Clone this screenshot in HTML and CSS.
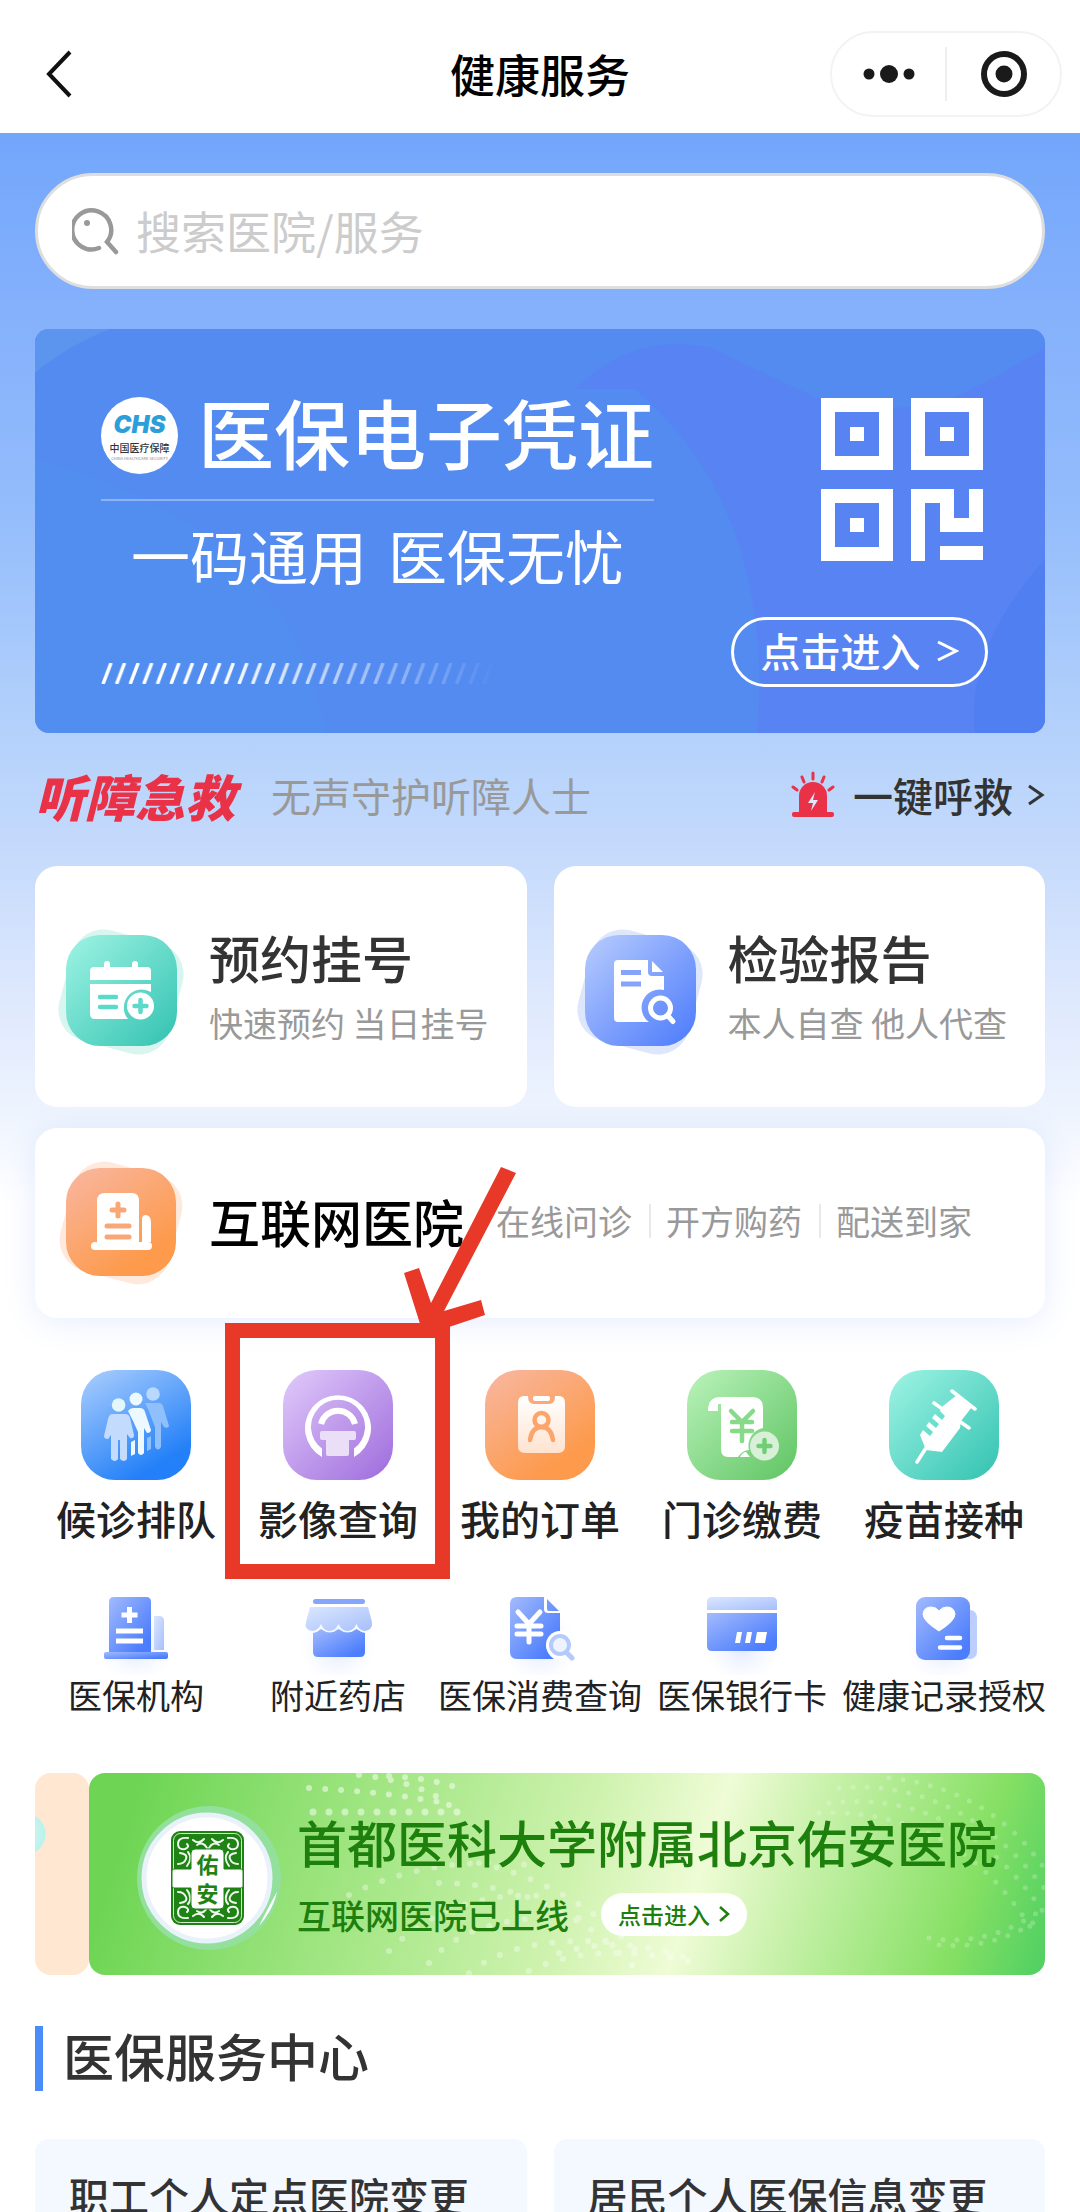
FILE: index.html
```html
<!DOCTYPE html>
<html lang="zh-CN">
<head>
<meta charset="utf-8">
<meta name="viewport" content="width=device-width, initial-scale=1">
<title>健康服务</title>
<link rel="stylesheet" href="styles.css">
</head>
<body>
<svg class="defs" aria-hidden="true">
  <defs>
    <linearGradient id="teal" x1="0" y1="0" x2="1" y2="1"><stop offset=".1" stop-color="#94efdf"/><stop offset=".9" stop-color="#3dc7b6"/></linearGradient>
    <linearGradient id="blue" x1="0" y1="0" x2="1" y2="1"><stop offset=".1" stop-color="#adc4fd"/><stop offset=".9" stop-color="#5682fc"/></linearGradient>
    <linearGradient id="orange" x1="0" y1="0" x2=".7" y2="1"><stop offset=".1" stop-color="#f9b498"/><stop offset=".9" stop-color="#fd9a4b"/></linearGradient>
    <linearGradient id="sky" x1="0" y1="0" x2=".6" y2="1"><stop offset=".05" stop-color="#a5cbfd"/><stop offset=".95" stop-color="#2380f8"/></linearGradient>
    <linearGradient id="purple" x1="0" y1="0" x2="1" y2="1"><stop offset=".1" stop-color="#dac1f8"/><stop offset=".9" stop-color="#a575df"/></linearGradient>
    <linearGradient id="green" x1="0" y1="0" x2="1" y2="1"><stop offset=".1" stop-color="#b1eeb2"/><stop offset=".9" stop-color="#68c96b"/></linearGradient>
    <linearGradient id="indigo" x1="0" y1="0" x2="1" y2="1"><stop offset="0" stop-color="#a3bbfd"/><stop offset=".85" stop-color="#4c7dfc"/></linearGradient>
    <linearGradient id="pale" x1="0" y1="0" x2="1" y2="1"><stop offset="0" stop-color="#dbe7ff"/><stop offset="1" stop-color="#a6bffb"/></linearGradient>
    <linearGradient id="sheet" x1="0" y1="0" x2="0" y2="1"><stop offset="0" stop-color="#fff"/><stop offset="1" stop-color="#ffe3d0"/></linearGradient>
    <linearGradient id="fade" gradientUnits="userSpaceOnUse" x1="0" y1="0" x2="396" y2="0"><stop offset=".3" stop-color="#fff"/><stop offset="1" stop-color="#fff" stop-opacity="0"/></linearGradient>
    <pattern id="slashes" width="13.600" height="21" patternUnits="userSpaceOnUse"><path d="M2 21 10 0" stroke="#fff" stroke-width="3.500"/></pattern>
    <mask id="fade-mask"><rect width="396" height="21" fill="url(#fade)"/></mask>
    <radialGradient id="glow"><stop offset="0" stop-color="#dfe8ff"/><stop offset="1" stop-color="#f3f6ff" stop-opacity="0"/></radialGradient>
  </defs>
</svg>

<header class="topbar">
  <button class="back" type="button" aria-label="返回">
    <svg width="28" height="48" viewBox="0 0 28 48"><path d="M26 2 5 24l21 22" fill="none" stroke="#111" stroke-width="4"/></svg>
  </button>
  <h1 class="topbar-title">健康服务</h1>
  <div class="capsule">
    <button class="capsule-btn" type="button" aria-label="更多">
      <svg width="54" height="24" viewBox="0 0 54 24" fill="#1a1a1a"><circle cx="7" cy="12" r="5.500"/><circle cx="27" cy="12" r="9"/><circle cx="47" cy="12" r="5.500"/></svg>
    </button>
    <button class="capsule-btn" type="button" aria-label="关闭">
      <svg width="46" height="46" viewBox="0 0 46 46"><circle cx="23" cy="23" r="20" fill="none" stroke="#1a1a1a" stroke-width="6"/><circle cx="23" cy="23" r="8.500" fill="#1a1a1a"/></svg>
    </button>
  </div>
</header>

<main class="page">
  <form class="search" role="search">
    <label class="search-icon" for="q" aria-label="搜索">
      <svg width="48" height="48" viewBox="0 0 48 48" fill="none" stroke="#999" stroke-width="4.500" stroke-linecap="round"><path d="M27 41A19.500 19.500 0 1 1 35 35L44 45"/><circle cx="15" cy="16" r="3" fill="#999" stroke="none"/></svg>
    </label>
    <input class="search-input" id="q" type="search" placeholder="搜索医院/服务">
  </form>

  <a class="voucher" href="#voucher">
    <svg class="voucher-bg" viewBox="0 0 1010 404" preserveAspectRatio="none" aria-hidden="true">
      <path d="M0 0h75Q30 18 0 44z" fill="#5b95ee"/>
      <path d="M0 130Q260 200 290 404H0z" fill="#5094ee" opacity=".4"/>
      <path d="M540 60Q600 0 680 20Q740 50 780 68Q860 90 920 68Q970 45 1010 18V404H722Q740 180 600 60z" fill="#5a80f2" opacity=".7"/>
      <path d="M1010 230Q930 320 940 404h70z" fill="#4f7ff0"/>
    </svg>
    <div class="voucher-main">
      <div class="voucher-head">
        <span class="chs"><b class="chs-mark">CHS</b><span class="chs-name">中国医疗保障</span><span class="chs-en">CHINA HEALTHCARE SECURITY</span></span>
        <strong class="voucher-title">医保电子凭证</strong>
      </div>
      <p class="voucher-sub"><span>一码通用</span><span>医保无忧</span></p>
      <svg class="hatch" width="396" height="21" viewBox="0 0 396 21" aria-hidden="true"><rect width="396" height="21" fill="url(#slashes)" mask="url(#fade-mask)"/></svg>
    </div>
    <div class="voucher-side">
      <svg class="qr" width="163" height="163" viewBox="0 0 163 163" fill="none" stroke="#fff" stroke-width="14">
        <path d="M7 7h58v58H7zM97 7h58v58H97zM7 98h58v58H7z"/>
        <path d="M97 163V98h29v29h29V91M119 155h43"/>
        <path d="M29 36h14M119 36h14M29 127h14"/>
      </svg>
      <span class="enter">点击进入<svg width="22" height="22" viewBox="0 0 22 22"><path d="M1 3l18 9L1 21" fill="none" stroke="#fff" stroke-width="3"/></svg></span>
    </div>
  </a>

  <a class="rescue" href="#rescue">
    <strong class="rescue-title">听障急救</strong>
    <span class="rescue-sub">无声守护听障人士</span>
    <span class="rescue-call">
      <svg width="48" height="48" viewBox="0 0 48 48" fill="#e93147"><path d="M8 41V25a14 14 0 0 1 28 0v16z"/><rect x="1" y="41" width="42" height="5" rx="2"/><path d="M22 2v6M11 6l2 5M33 6l-2 5M2 16l4 3M42 16l-4 3" stroke="#e93147" stroke-width="3" stroke-linecap="round"/><path d="M24 21l-7 11h5l-2 8 7-11h-5z" fill="#dfe8fb"/></svg>
      一键呼救
      <svg width="18" height="22" viewBox="0 0 18 22"><path d="M2 2l13 9L2 20" fill="none" stroke="#333" stroke-width="3"/></svg>
    </span>
  </a>

  <section class="cards">
    <a class="card" href="#register">
      <svg class="card-icon" width="128" height="138" viewBox="0 -10 128 138">
        <rect x="7" y="7" width="114" height="114" rx="32" fill="#d8f5f0" transform="rotate(15 64 64)"/>
        <rect x="9" y="7" width="111" height="111" rx="34" fill="url(#teal)"/>
        <path d="M33 52v-9q0-4 4-4h10v-3a3 3 0 0 1 6 0v3h22v-3a3 3 0 0 1 6 0v3h9q4 0 4 4v9zM33 56h61v8a18 18 0 0 0-23 27H38q-5 0-5-5z" fill="#fff"/>
        <circle cx="83.500" cy="78" r="13.500" fill="#fff"/>
        <path d="M43 69h16M43 79h16M83.500 72v12M77.500 78h12" stroke="#5bd9c9" stroke-width="4.500" stroke-linecap="round"/>
      </svg>
      <span class="card-text"><strong class="card-title">预约挂号</strong><span class="card-sub">快速预约 当日挂号</span></span>
    </a>
    <a class="card" href="#report">
      <svg class="card-icon" width="128" height="138" viewBox="0 -10 128 138">
        <rect x="7" y="7" width="114" height="114" rx="32" fill="#dde6fb" transform="rotate(15 64 64)"/>
        <rect x="9" y="7" width="111" height="111" rx="34" fill="url(#blue)"/>
        <path d="M42 32h30v12q0 4 4 4h12v14a18 18 0 0 0-15 32H42q-4 0-4-4V36q0-4 4-4zM76 33l11 11H76z" fill="#fff"/>
        <path d="M45 44.500h20M45 56h20" stroke="#86a4fd" stroke-width="5"/>
        <circle cx="84.500" cy="80" r="10" fill="none" stroke="#fff" stroke-width="5"/><path d="M92 88l5 5.500" stroke="#fff" stroke-width="5" stroke-linecap="round"/>
      </svg>
      <span class="card-text"><strong class="card-title">检验报告</strong><span class="card-sub">本人自查 他人代查</span></span>
    </a>
    <a class="card card-wide" href="#online">
      <svg class="card-icon" width="128" height="132" viewBox="0 -4 128 132">
        <rect x="8" y="8" width="112" height="112" rx="32" fill="#ffe9dc" transform="rotate(15 64 64)"/>
        <rect x="9" y="9" width="110" height="108" rx="34" fill="url(#orange)"/>
        <path d="M40 83V42q0-8 8-8h27q7 0 7 8v41zM85 83V60q0-4 4-4 5 1 5 7v20z" fill="#fff"/>
        <rect x="34" y="83" width="61" height="8" rx="4" fill="#fff"/>
        <path d="M61 45v12M55 51h12M50 67h22M50 78h22" stroke="#faa778" stroke-width="5" stroke-linecap="round"/>
      </svg>
      <strong class="card-title card-title-dark">互联网医院</strong>
      <span class="card-tags"><span>在线问诊</span><span>开方购药</span><span>配送到家</span></span>
    </a>
  </section>

  <nav class="services" aria-label="常用服务">
    <a class="service" href="#queue">
      <svg width="110" height="110" viewBox="0 0 110 110">
        <rect width="110" height="110" rx="34" fill="url(#sky)"/>
        <g fill="#8fc0fb"><circle cx="72" cy="24" r="6.800" fill="#b9d8fd"/><path d="M64 33h14q3 0 4 3l6 20q-1 3-5 1l-3-5v25q-3 5-6 0V57q-4-10-6-16zM66 68l4-2v13l-4 2z"/></g>
        <g fill="#ecf9fe"><circle cx="55" cy="29" r="6.500"/><path d="M47 41q2-3 6-3h6q4 0 5 4l6 18q0 3-4 3l-3-5v25q-3 4-6 0V62q-5-12-10-21zM50 72l4-2v14l-4 2z"/></g>
        <g fill="#c3dcfe"><circle cx="37.600" cy="35" r="6.800" fill="#e2f6fb"/><path d="M32 44h12q4 0 5 4l4 17q0 4-4 3l-3-4v25q-3 4-7 0V70h-2v19q-3 4-7 0V65l-3 4q-4 0-4-3l4-17q1-5 5-5z"/></g>
      </svg>
      <span>候诊排队</span>
    </a>
    <a class="service service-marked" href="#imaging">
      <svg width="110" height="110" viewBox="0 0 110 110">
        <rect width="110" height="110" rx="34" fill="url(#purple)"/>
        <path d="M39 87V78.500A27 27 0 1 1 71 78.500V87A33 33 0 1 0 39 87z" fill="#fff"/>
        <path d="M38 54A17.500 17.500 0 0 1 72 54" fill="none" stroke="#fff" stroke-width="6"/>
        <path d="M39 61h32q2 0 2 2v5q0 2-2 2h-5v14q0 2-2 2H45q-2 0-2-2V70h-4q-2 0-2-2v-5q0-2 2-2z" fill="#eadff7"/>
      </svg>
      <span>影像查询</span>
      <i class="mark-box"></i>
      <svg class="mark-arrow" width="116" height="162" viewBox="0 0 116 162"><path d="M101 0l15 6L44 144l37-11 4 15-36 12H21L4 106l15-5 12 35z" fill="#e73828"/></svg>
    </a>
    <a class="service" href="#orders">
      <svg width="110" height="110" viewBox="0 0 110 110">
        <rect width="110" height="110" rx="34" fill="url(#orange)"/>
        <path d="M39 26h4q0 8 6 8h15q6 0 6-8h4q6 0 6 7v43q0 7-7 7H40q-7 0-7-7V33q0-7 6-7z" fill="url(#sheet)"/>
        <rect x="48" y="26" width="17" height="5" rx="2" fill="#fff"/>
        <path d="M45 70q2-13 11.500-13T68 70" fill="none" stroke="#fca46a" stroke-width="4.500" stroke-linecap="round"/>
        <circle cx="56.500" cy="50" r="7" fill="none" stroke="#fca46a" stroke-width="4.500"/>
      </svg>
      <span>我的订单</span>
    </a>
    <a class="service" href="#pay">
      <svg width="110" height="110" viewBox="0 0 110 110">
        <rect width="110" height="110" rx="34" fill="url(#green)"/>
        <path d="M21 41q0-14 12-14h32q11 0 11 11v20a18 18 0 0 0-14 22q-6 0-11 7H41q-7 0-7-8V34h-3v7zM53 87q3-5 6-5l4 5z" fill="#fff"/>
        <path d="M44 41l11 11 11-11M55 52v19M45 52h20M45 61h20" fill="none" stroke="#86da89" stroke-width="4.500" stroke-linecap="round"/>
        <circle cx="77.500" cy="76" r="14.500" fill="#d8f0d8"/><path d="M77.500 70v12M71.500 76h12" stroke="#72ce76" stroke-width="4.500" stroke-linecap="round"/>
      </svg>
      <span>门诊缴费</span>
    </a>
    <a class="service" href="#vaccine">
      <svg width="110" height="110" viewBox="0 0 110 110">
        <rect width="110" height="110" rx="34" fill="url(#teal)"/>
        <path d="M68 25l15 12-11 14-1 7-18 24-16-2-6-15 3-5 7 6 3-4-7-6 3-4 7 6 3-4-7-6 3-4 7 6 3-4-5-5 3-5z" fill="#fff"/>
        <path d="M63 21l23 18M45 33l35 25M37 78l-9 14" stroke="#fff" stroke-width="3.500" stroke-linecap="round"/>
      </svg>
      <span>疫苗接种</span>
    </a>
  </nav>

  <nav class="links" aria-label="医保服务">
    <a class="link" href="#inst">
      <svg width="80" height="80" viewBox="0 0 80 80">
        <circle cx="40" cy="52" r="38" fill="url(#glow)"/>
        <path d="M13 57V7q0-5 5-5h32q5 0 5 5v50z" fill="url(#indigo)"/><rect x="8" y="57" width="64" height="7" rx="2" fill="url(#indigo)"/>
        <path d="M58 21h5q5 0 5 5v29H58z" fill="url(#pale)"/>
        <path d="M33.500 12v16M25.500 20h16M20 36h27M20 46h27" stroke="#fff" stroke-width="5"/>
      </svg>
      <span>医保机构</span>
    </a>
    <a class="link" href="#pharmacy">
      <svg width="80" height="80" viewBox="0 0 80 80">
        <circle cx="40" cy="52" r="38" fill="url(#glow)"/>
        <rect x="15" y="4" width="52" height="5" rx="2.500" fill="#86a6fd"/>
        <path d="M15 38q5-1 8-4 9 7 17.500 0 9 7 18 0 4 3 8.500 4v19q0 5-5 5H20q-5 0-5-5z" fill="url(#indigo)"/>
        <path d="M12 12h58l4 15q1 8-7 9-6 0-8.500-7-3 7-9 7t-9-7q-3 7-9 7t-8.500-7q-3 7-9 7-8-1-6-9z" fill="url(#pale)"/>
      </svg>
      <span>附近药店</span>
    </a>
    <a class="link" href="#spending">
      <svg width="80" height="80" viewBox="0 0 80 80">
        <circle cx="40" cy="52" r="38" fill="url(#glow)"/>
        <path d="M17 2h27v12q0 4 4 4h12v18a15 15 0 0 0-6 28H17q-7 0-7-7V9q0-7 7-7zM47 4l12 12H49q-2 0-2-2z" fill="url(#indigo)"/>
        <path d="M18 17l11 12 11-12M29 29v18M17 31h24M17 39h24" fill="none" stroke="#fff" stroke-width="5" stroke-linecap="round"/>
        <circle cx="60" cy="50" r="14" fill="#fff"/>
        <circle cx="60" cy="50" r="9" fill="#eef3ff" stroke="#b4cafc" stroke-width="4"/><path d="M67 58l5 5" stroke="#b4cafc" stroke-width="5" stroke-linecap="round"/>
      </svg>
      <span>医保消费查询</span>
    </a>
    <a class="link" href="#bankcard">
      <svg width="80" height="80" viewBox="0 0 80 80">
        <circle cx="40" cy="52" r="38" fill="url(#glow)"/>
        <path d="M5 15V7q0-5 5-5h60q5 0 5 5v8z" fill="url(#pale)"/><path d="M5 18h70v33q0 5-5 5H10q-5 0-5-5z" fill="url(#indigo)"/>
        <path d="M35 37h5l-2 11h-5zM45 37h5l-2 11h-5zM55 37h10l-2 11H53z" fill="#fff"/>
      </svg>
      <span>医保银行卡</span>
    </a>
    <a class="link" href="#records">
      <svg width="80" height="80" viewBox="0 0 80 80">
        <circle cx="40" cy="52" r="38" fill="url(#glow)"/>
        <rect x="40" y="15" width="33" height="49" rx="7" fill="#bccffc"/>
        <rect x="12" y="2" width="54" height="63" rx="9" fill="url(#indigo)"/>
        <path d="M35 36Q19 26 19 19q1-7 8-7 5 0 8 4 3-4 8-4 7 0 8 7 0 7-16 17z" fill="#fff" stroke="#fff" stroke-linejoin="round"/>
        <path d="M43 43h13M36 52.500h20" stroke="#fff" stroke-width="4.500" stroke-linecap="round"/>
      </svg>
      <span>健康记录授权</span>
    </a>
  </nav>

  <section class="carousel">
    <div class="slide-prev"></div>
    <a class="slide" href="#youan">
      <svg class="slide-dots" viewBox="0 0 956 202" preserveAspectRatio="none" fill="none" stroke="#fff" stroke-linecap="round" aria-hidden="true">
        <g stroke-width="6" stroke-dasharray="0 16" opacity=".5"><path d="M270 2q60 6 90 30"/><path d="M220 15q80 4 140 16"/><path d="M300 3q40 2 70 12"/><path d="M224 39h150" stroke-width="7"/></g>
        <g stroke-width="6" stroke-dasharray="0 18" opacity=".35"><path d="M260 122q80-40 180-30"/><path d="M300 178q60-60 150-55"/><path d="M340 190q40-50 150-45"/><path d="M380 200q50-40 150-30"/><path d="M440 198q60-30 160-10"/><path d="M350 110q120 0 200 90"/><path d="M390 90q90 20 160 90"/><path d="M470 180q70-20 140 10"/></g>
        <g stroke-width="5" stroke-dasharray="0 14" opacity=".22"><path d="M750 15q120-10 205 100"/><path d="M740 30q130-15 215 110"/><path d="M800 5q100 10 155 90"/><path d="M730 40q140-5 215 120"/><path d="M840 165q60 10 115-30"/><path d="M850 172q60 5 105-30"/></g>
      </svg>
      <svg class="emblem" width="148" height="156" viewBox="0 -8 148 156">
        <circle cx="74" cy="74" r="72" fill="#93df9c"/><circle cx="72" cy="74" r="63" fill="#fff" stroke="#e9f2fb" stroke-width="5"/>
        <path d="M124 122q14-16 18-34-6 10-18 34z" fill="#fff"/>
        <rect x="36" y="27" width="73" height="94" rx="9" fill="#1f8214"/>
        <rect x="38.500" y="29.500" width="68" height="89" rx="7" fill="none" stroke="#d6ecd2" stroke-width="1"/>
        <g fill="none" stroke="#eef8ec" stroke-width="2" stroke-linecap="round">
          <path d="M53 34q-10-1-10 6 0 6 7 5 5-2 2-5M43 60q6 0 8-5t-6-6M52 62q6-8 1-14M58 36q6 5 11-1M62 41q6-4 10 3"/>
          <path d="M93 34q10-1 10 6 0 6-7 5-5-2-2-5M103 60q-6 0-8-5t6-6M94 62q-6-8-1-14M88 36q-6 5-11-1M84 41q-6-4-10 3"/>
          <path d="M53 114q-10 1-10-6 0-6 7-5 5 2 2 5M43 88q6 0 8 5t-6 6M52 86q6 8 1 14M58 112q6-5 11 1M62 107q6 4 10-3"/>
          <path d="M93 114q10 1 10-6 0-6-7-5-5 2-2 5M103 88q-6 0-8 5t6 6M94 86q-6 8-1 14M88 112q-6-5-11 1M84 107q-6 4-10-3"/>
        </g>
        <path d="M60 45h25q4 0 4 4v16h17q2 0 2 2v15q0 2-2 2H89v17q0 4-4 4H60q-4 0-4-4V84H39q-2 0-2-2V67q0-2 2-2h17V49q0-4 4-4z" fill="#fff" stroke="#1f8214"/>
        <text x="72.500" y="69" class="seal">佑</text><text x="72.500" y="98" class="seal">安</text>
      </svg>
      <span class="slide-text">
        <strong class="slide-title">首都医科大学附属北京佑安医院</strong>
        <span class="slide-row"><span class="slide-sub">互联网医院已上线</span><span class="slide-btn">点击进入<svg width="12" height="16" viewBox="0 0 12 16"><path d="M2 1l8 7-8 7" fill="none" stroke="#1d7f0c" stroke-width="2.500"/></svg></span></span>
      </span>
    </a>
  </section>

  <section class="center">
    <h2 class="center-title">医保服务中心</h2>
    <div class="center-grid">
      <a class="center-item" href="#hospital">职工个人定点医院变更</a>
      <a class="center-item" href="#info">居民个人医保信息变更</a>
    </div>
  </section>
</main>
</body>
</html>
```
FILE: styles.css
```css
* { box-sizing: border-box; }

body {
  margin: 0;
  height: 100vh;
  display: flex;
  flex-direction: column;
  overflow: hidden;
  background: #fff;
  color: #333;
  font-family: "Noto Sans CJK SC", "Noto Sans", sans-serif;
}

a { color: inherit; text-decoration: none; }
button { border: 0; background: none; padding: 0; font: inherit; }
svg { display: block; flex: none; }
h1, h2, p { margin: 0; }
.defs { position: absolute; width: 0; height: 0; }

/* top bar */
.topbar {
  flex: none;
  display: grid;
  grid-template-columns: 1fr auto 1fr;
  align-items: center;
  height: 133px;
  padding: 15px 18px 0;
}
.topbar-title { color: #000; font-size: 45px; line-height: 60px; font-weight: 500; }
.back { justify-self: start; margin-left: 26px; }
.capsule {
  justify-self: end;
  display: flex;
  align-items: center;
  width: 232px;
  height: 86px;
  border: 2px solid #f3f3f3;
  border-radius: 43px;
}
.capsule-btn { flex: 1; height: 54px; display: flex; align-items: center; justify-content: center; }
.capsule-btn + .capsule-btn { border-left: 2px solid #eee; }

/* scrolling page */
.page {
  flex: 1;
  min-height: 0;
  overflow-y: auto;
  scrollbar-width: none;
  padding: 40px 35px;
  background: linear-gradient(#72a6fb 0, #85b1fc 180px, #93bcfc 370px, #b5d2fb 610px, #c5dafc 720px, #dfe9fd 870px, #eef4fe 980px, #fff 1070px) no-repeat local;
}

.search {
  display: flex;
  align-items: center;
  gap: 16px;
  height: 116px;
  padding: 0 34px;
  background: #fff;
  border: 3px solid #dedede;
  border-radius: 58px;
}
.search-input {
  flex: 1;
  min-width: 0;
  height: 66px;
  padding: 0;
  border: 0;
  outline: 0;
  background: none;
  color: #333;
  font: 400 45px/66px "Noto Sans CJK SC", sans-serif;
}
.search-input::placeholder { color: #ccc; opacity: 1; }

/* insurance voucher */
.voucher {
  position: relative;
  display: flex;
  justify-content: space-between;
  height: 404px;
  margin-top: 40px;
  padding: 60px 57px 46px 66px;
  border-radius: 14px;
  overflow: hidden;
  background: #548bf0;
  color: #fff;
}
.voucher-bg { position: absolute; inset: 0; width: 100%; height: 100%; }
.voucher-main, .voucher-side { position: relative; display: flex; flex-direction: column; }
.voucher-head {
  display: flex;
  align-items: center;
  gap: 20px;
  height: 112px;
  padding-bottom: 18px;
  border-bottom: 2px solid #8db3f6;
}
.voucher-title { padding-bottom: 8px; font-size: 76px; line-height: 88px; font-weight: 500; }
.chs {
  display: flex;
  flex-direction: column;
  align-items: center;
  justify-content: center;
  width: 77px;
  height: 77px;
  border-radius: 50%;
  background: #fff;
  color: #333;
}
.chs-mark { font: italic 900 24px/30px Inter, sans-serif; color: #2c9fda; }
.chs-name { font-size: 10px; line-height: 15px; font-weight: 500; }
.chs-en { font-size: 4px; line-height: 6px; color: #888; white-space: nowrap; }
.voucher-sub {
  display: flex;
  gap: 21px;
  padding: 16px 0 0 30px;
  font-size: 59px;
  line-height: 76px;
}
.hatch { margin-top: auto; margin-bottom: 3px; }
.voucher-side { align-items: flex-end; justify-content: space-between; }
.qr { margin: 9px 4px 0 0; }
.enter {
  display: flex;
  align-items: center;
  justify-content: center;
  gap: 16px;
  width: 257px;
  height: 70px;
  padding-bottom: 4px;
  border: 3px solid #fff;
  border-radius: 35px;
  font-size: 40px;
  line-height: 60px;
  font-weight: 500;
}

/* rescue row */
.rescue { display: flex; align-items: center; height: 133px; padding-bottom: 10px; font-size: 40px; line-height: 60px; }
.rescue-title { font-size: 50px; font-weight: 900; font-style: italic; color: #e93147; }
.rescue-sub { margin-left: 36px; color: #999; }
.rescue-call { display: flex; align-items: center; gap: 14px; margin-left: auto; font-weight: 500; }

/* feature cards */
.cards { display: grid; grid-template-columns: 1fr 1fr; gap: 21px 27px; }
.card {
  display: flex;
  align-items: center;
  gap: 24px;
  height: 241px;
  padding: 0 22px;
  border-radius: 22px;
  background: #fff;
  white-space: nowrap;
}
.card-text { display: flex; flex-direction: column; }
.card-title { font-size: 51px; line-height: 72px; font-weight: 500; }
.card-title-dark { color: #000; }
.card-sub, .card-tags { font-size: 34px; line-height: 60px; color: #999; }
.card-wide { grid-column: 1 / -1; height: 190px; padding-bottom: 4px; box-shadow: 0 4px 32px rgba(80, 130, 250, .14); }
.card-tags { display: flex; align-items: center; margin-left: 8px; }
.card-tags span + span { margin-left: 17px; padding-left: 17px; background: linear-gradient(#e8e8e8, #e8e8e8) left center / 2px 34px no-repeat; }

/* service grids */
.services, .links { display: grid; grid-template-columns: repeat(5, minmax(0, 1fr)); color: #222; }
.services { margin-top: 52px; }
.service, .link { display: flex; flex-direction: column; align-items: center; white-space: nowrap; }
.service { position: relative; gap: 8px; font-size: 40px; line-height: 60px; font-weight: 500; }
.mark-box { position: absolute; inset: -47px -11px -31px -12px; border: 15px solid #e73828; }
.mark-arrow { position: absolute; left: 163px; top: -203px; }
.links { margin-top: 47px; }
.link { font-size: 34px; line-height: 40px; }

/* carousel */
.carousel { display: flex; height: 202px; margin-top: 58px; }
.slide-prev {
  width: 54px;
  border-radius: 16px;
  background: radial-gradient(circle at -10px 61px, #d5f5f0 0, #b9f3ec 20px, transparent 21px) #ffe7d1;
}
.slide {
  position: relative;
  flex: 1;
  display: flex;
  align-items: center;
  gap: 14px;
  padding-left: 46px;
  border-radius: 16px;
  overflow: hidden;
  background: linear-gradient(108deg, #6dd553 5%, #9fe581 28%, #cdf2ad 50%, #effcd6 63%, #c4f0a6 74%, #86e064 90%, #54d162 99%);
  color: #1d7f0c;
  white-space: nowrap;
}
.slide-dots { position: absolute; inset: 0; width: 100%; height: 100%; }
.emblem { position: relative; }
.seal { font-size: 22px; font-weight: 700; fill: #1f8214; text-anchor: middle; }
.slide-text { position: relative; display: flex; flex-direction: column; }
.slide-title { font-size: 50px; line-height: 80px; font-weight: 500; }
.slide-row { display: flex; align-items: center; gap: 32px; height: 66px; }
.slide-sub { font-size: 34px; font-weight: 500; }
.slide-btn {
  display: flex;
  align-items: center;
  justify-content: center;
  gap: 8px;
  width: 146px;
  height: 43px;
  border-radius: 22px;
  background: #fff;
  font-size: 23px;
  font-weight: 500;
}

/* service centre */
.center { padding-top: 51px; }
.center-title { padding: 0 0 7px 20px; border-left: 8px solid #4a8df8; font-size: 51px; line-height: 58px; font-weight: 500; }
.center-grid { display: grid; grid-template-columns: 1fr 1fr; gap: 27px; margin-top: 48px; }
.center-item { min-height: 160px; padding: 26px 34px; border-radius: 14px; background: #f4f8ff; font-size: 40px; line-height: 60px; font-weight: 500; white-space: nowrap; }
```
